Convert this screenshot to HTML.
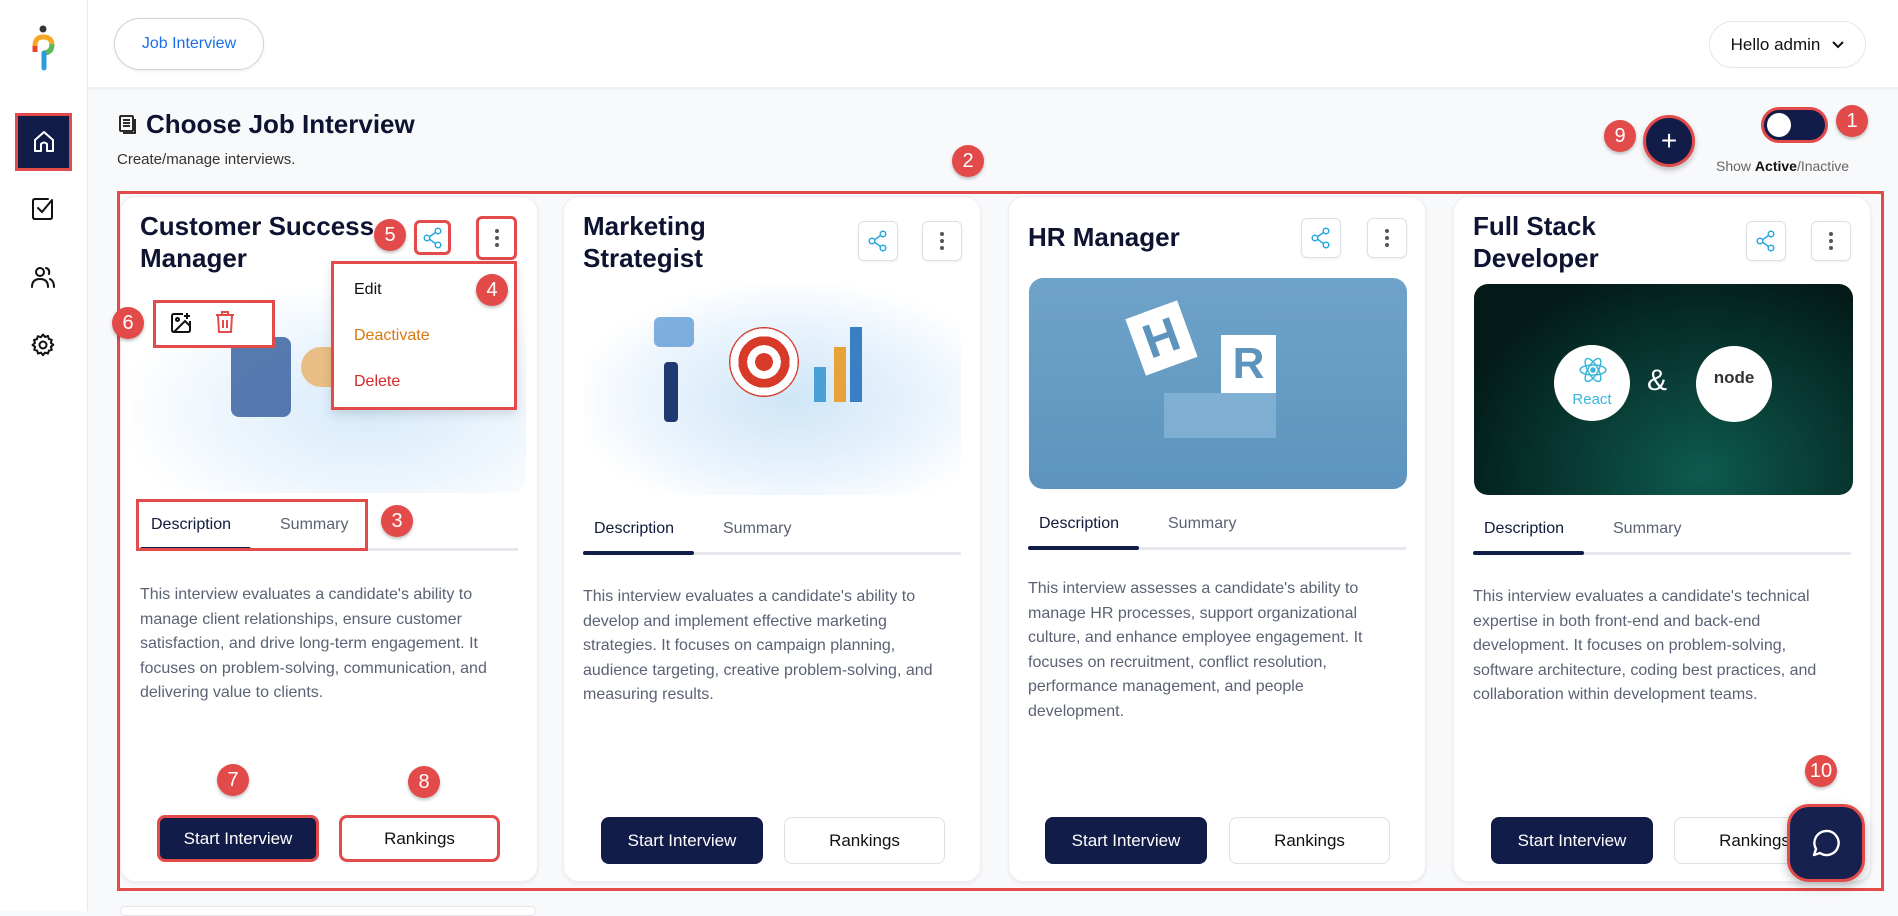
<!DOCTYPE html>
<html><head><meta charset="utf-8">
<style>
*{box-sizing:border-box;margin:0;padding:0}
body{width:1898px;height:911px;overflow:hidden;background:#f8f9fb;font-family:"Liberation Sans",sans-serif;position:relative;color:#111a3a}
.abs{position:absolute}
.side{left:0;top:0;width:88px;height:911px;background:#fff;border-right:1px solid #e8eaef}
.head{left:88px;top:0;width:1810px;height:90px;background:#fff;border-bottom:3px solid #eef0f5}
.pill{left:114px;top:18px;width:150px;height:52px;border:1px solid #cfd3dc;border-radius:26px;background:#fff;color:#1a6fe8;font-size:16px;display:flex;align-items:center;justify-content:center;box-shadow:0 1px 3px rgba(0,0,0,.08)}
.hello{left:1709px;top:21px;width:157px;height:47px;border:1px solid #e4e6ec;border-radius:24px;background:#fff;font-size:17px;display:flex;align-items:center;justify-content:center;gap:12px;color:#111}
.badge{position:absolute;width:32px;height:32px;border-radius:50%;background:#e34a4a;color:#fff;font-size:20px;display:flex;align-items:center;justify-content:center;box-shadow:0 2px 3px rgba(0,0,0,.25);z-index:5}
.red{position:absolute;border:3px solid #e34a4a;z-index:4}
.card{position:absolute;top:196px;width:418px;height:686px;background:#fff;border:1px solid #eceef2;border-radius:16px;box-shadow:0 2px 4px rgba(0,0,0,.06)}
.title{position:absolute;left:19px;font-size:26px;font-weight:bold;line-height:32px;color:#0d1330}
.ib{position:absolute;width:40px;height:40px;border:1px solid #dde0e6;border-radius:6px;background:#fff;display:flex;align-items:center;justify-content:center;box-shadow:0 1px 2px rgba(0,0,0,.06)}
.tabs{position:absolute;left:19px;width:378px;height:3px;background:#e7e8ee}
.tabs i{position:absolute;left:0;top:-1px;width:111px;height:4px;background:#121c48;border-radius:2px}
.tab{position:absolute;font-size:16px}
.desc{position:absolute;left:19px;width:395px;font-size:16px;line-height:24.5px;color:#5a6274}
.btn1{position:absolute;width:162px;height:47px;background:#121c48;color:#fff;border-radius:8px;font-size:17px;display:flex;align-items:center;justify-content:center}
.btn2{position:absolute;width:161px;height:47px;background:#fff;border:1px solid #dde0e6;border-radius:8px;font-size:17px;display:flex;align-items:center;justify-content:center;color:#111}
</style></head><body>
<div class="abs side"></div>
<svg class="abs" style="left:30px;top:24px" width="28" height="48" viewBox="0 0 28 48"><circle cx="13" cy="5" r="3.5" fill="#333"/><path d="M5 22 Q5 13 13 13 Q22 13 22 21 Q22 28 14 29" stroke="#f5a623" stroke-width="5" fill="none"/><path d="M5 22 L5 28" stroke="#e8452c" stroke-width="5"/><path d="M22 20 Q22 28 15 29" stroke="#5cb85c" stroke-width="5" fill="none"/><path d="M14 29 L14 44" stroke="#2d9cdb" stroke-width="5" stroke-linecap="round"/></svg>
<div class="abs" style="left:15px;top:113px;width:57px;height:58px;background:#121c48;border:3px solid #e34a4a"></div>
<svg class="abs" style="left:33px;top:130px" width="22" height="24" viewBox="0 0 22 24" fill="none" stroke="#fff" stroke-width="2" stroke-linejoin="round"><path d="M2 10 L11 2 L20 10 V21 H14 V14 Q11 11 8 14 V21 H2 Z"/></svg>
<svg class="abs" style="left:31px;top:197px" width="24" height="24" viewBox="0 0 24 24" fill="none" stroke="#111" stroke-width="2" stroke-linecap="round"><path d="M21 4 V20 Q21 22 19 22 H4 Q2 22 2 20 V4 Q2 2 4 2 H17"/><path d="M7 11 L11 15 L21 3"/></svg>
<svg class="abs" style="left:31px;top:266px" width="24" height="22" viewBox="0 0 24 22" fill="none" stroke="#111" stroke-width="2" stroke-linecap="round"><circle cx="9" cy="6" r="4"/><path d="M1 21 Q1 13 9 13 Q17 13 17 21"/><path d="M15 2 Q19 3 18 8 M19 13 Q23 15 23 21"/></svg>
<svg class="abs" style="left:31px;top:333px" width="24" height="24" viewBox="0 0 24 24" fill="none" stroke="#111" stroke-width="2"><circle cx="12" cy="12" r="3.5"/><path d="M12 1.5l2 2.5 3-1 .8 3 3 .8-1 3 2.5 2-2.5 2 1 3-3 .8-.8 3-3-1-2 2.5-2-2.5-3 1-.8-3-3-.8 1-3L1.5 12 4 10l-1-3 3-.8.8-3 3 1z" stroke-linejoin="round"/></svg>

<div class="abs head"></div>
<div class="abs pill">Job Interview</div>
<div class="abs hello">Hello admin <svg width="12" height="8" viewBox="0 0 12 8"><path d="M1 1 L6 6 L11 1" stroke="#111" stroke-width="2" fill="none"/></svg></div>

<svg class="abs" style="left:118px;top:114px" width="20" height="22" viewBox="0 0 20 22" fill="none" stroke="#111" stroke-width="1.8"><rect x="2" y="2" width="13" height="15" rx="1"/><path d="M5 6h7M5 9h7M5 12h7M5 19h12V5"/></svg>
<div class="abs" style="left:146px;top:109px;font-size:26px;font-weight:bold;color:#0d1330">Choose Job Interview</div>
<div class="abs" style="left:117px;top:151px;font-size:15px;color:#333">Create/manage interviews.</div>

<div class="badge" style="left:952px;top:145px">2</div>
<div class="badge" style="left:1604px;top:120px">9</div>
<div class="abs" style="left:1643px;top:115px;width:52px;height:52px;border-radius:50%;background:#121c48;border:3px solid #e34a4a;color:#fff;font-size:28px;display:flex;align-items:center;justify-content:center;box-shadow:0 3px 6px rgba(0,0,0,.25)">+</div>
<div class="abs" style="left:1761px;top:107px;width:67px;height:36px;border-radius:18px;background:#121c48;border:3px solid #e34a4a"><div style="position:absolute;left:3px;top:3px;width:24px;height:24px;border-radius:50%;background:#fff"></div></div>
<div class="badge" style="left:1836px;top:105px">1</div>
<div class="abs" style="left:1716px;top:158px;font-size:14px;color:#666">Show <b style="color:#111">Active</b>/Inactive</div>

<div class="red" style="left:117px;top:191px;width:1767px;height:700px;z-index:1"></div>

<!-- card 1 -->
<div class="card" style="left:120px">
 <div class="title" style="top:13px">Customer Success<br>Manager</div>
 <div class="ib" style="left:293px;top:23px;border:3px solid #e34a4a;width:37px;height:35px"><svg width="20" height="22" viewBox="0 0 20 22" fill="none" stroke="#2aa6de" stroke-width="1.5"><circle cx="15" cy="4" r="2.8"/><circle cx="4" cy="11" r="2.8"/><circle cx="15" cy="18" r="2.8"/><path d="M6.5 9.7L12.5 5.5M6.5 12.3L12.5 16.5"/></svg></div>
 <div class="ib" style="left:355px;top:19px;border:3px solid #e34a4a;width:41px;height:44px"><svg width="6" height="20"><circle cx="3" cy="3" r="2" fill="#555"/><circle cx="3" cy="10" r="2" fill="#555"/><circle cx="3" cy="17" r="2" fill="#555"/></svg></div>
 <div class="abs" style="left:10px;top:90px;width:395px;height:206px;border-radius:14px;background:radial-gradient(ellipse at 60% 60%,#d7ebfa 0%,#eef6fd 45%,#fff 75%)"></div>
 <div class="abs" style="left:110px;top:140px;width:60px;height:80px;background:#2f5a9a;border-radius:8px;opacity:.8"></div>
 <div class="abs" style="left:180px;top:150px;width:60px;height:40px;background:#e8b878;border-radius:20px;opacity:.9"></div>
 <div class="abs" style="left:32px;top:103px;width:122px;height:48px;border:3px solid #e34a4a;background:#fff"></div>
 <svg class="abs" style="left:48px;top:114px" width="24" height="24" viewBox="0 0 24 24" fill="none" stroke="#111" stroke-width="2"><path d="M14 3H5Q3 3 3 5V19Q3 21 5 21H19Q21 21 21 19V10"/><circle cx="8.5" cy="8.5" r="1.5"/><path d="M21 15l-5-5L5 21M18 2v6M15 5h6"/></svg>
 <svg class="abs" style="left:93px;top:113px" width="22" height="24" viewBox="0 0 22 24" fill="none" stroke="#e34a4a" stroke-width="2"><path d="M2 5h18M8 5V2h6v3M4 5l1 17h12l1-17M9 10v8M13 10v8"/></svg>
 <div class="abs" style="left:210px;top:64px;width:186px;height:149px;background:#fff;border:3px solid #e34a4a;box-shadow:0 4px 10px rgba(0,0,0,.12);z-index:3">
  <div style="position:absolute;left:20px;top:17px;font-size:16px;color:#111">Edit</div>
  <div style="position:absolute;left:20px;top:63px;font-size:16px;color:#d9780f">Deactivate</div>
  <div style="position:absolute;left:20px;top:109px;font-size:16px;color:#d62828">Delete</div>
 </div>
 <div class="tabs" style="top:351px"><i></i></div>
 <div class="tab" style="left:30px;top:319px">Description</div>
 <div class="tab" style="left:159px;top:319px;color:#5a6274">Summary</div>
 <div class="red" style="left:15px;top:302px;width:232px;height:52px"></div>
 <div class="desc" style="top:386px">This interview evaluates a candidate's ability to<br>manage client relationships, ensure customer<br>satisfaction, and drive long-term engagement. It<br>focuses on problem-solving, communication, and<br>delivering value to clients.</div>
 <div class="btn1" style="left:36px;top:618px;border:3px solid #e34a4a">Start Interview</div>
 <div class="btn2" style="left:218px;top:618px;border:3px solid #e34a4a">Rankings</div>
</div>
<div class="badge" style="left:374px;top:219px">5</div>
<div class="badge" style="left:476px;top:274px">4</div>
<div class="badge" style="left:112px;top:307px">6</div>
<div class="badge" style="left:381px;top:505px">3</div>
<div class="badge" style="left:217px;top:764px">7</div>
<div class="badge" style="left:408px;top:766px">8</div>

<!-- card 2 -->
<div class="card" style="left:563px">
 <div class="title" style="top:13px">Marketing<br>Strategist</div>
 <div class="ib" style="left:294px;top:24px"><svg width="20" height="22" viewBox="0 0 20 22" fill="none" stroke="#2aa6de" stroke-width="1.5"><circle cx="15" cy="4" r="2.8"/><circle cx="4" cy="11" r="2.8"/><circle cx="15" cy="18" r="2.8"/><path d="M6.5 9.7L12.5 5.5M6.5 12.3L12.5 16.5"/></svg></div>
 <div class="ib" style="left:358px;top:24px"><svg width="6" height="20"><circle cx="3" cy="3" r="2" fill="#555"/><circle cx="3" cy="10" r="2" fill="#555"/><circle cx="3" cy="17" r="2" fill="#555"/></svg></div>
 <div class="abs" style="left:19px;top:88px;width:378px;height:210px;border-radius:14px;background:radial-gradient(ellipse at 55% 55%,#cfe6f7 0%,#e9f3fc 45%,#fff 75%)"></div>
 <div class="abs" style="left:90px;top:120px;width:40px;height:30px;border-radius:6px;background:#4a8fd0;opacity:.7"></div>
 <div class="abs" style="left:165px;top:130px;width:70px;height:70px;border-radius:50%;background:radial-gradient(circle,#d83a2a 0 18%,#fff 18% 34%,#d83a2a 34% 52%,#fff 52% 68%,#d83a2a 68%)"></div>
 <div class="abs" style="left:100px;top:165px;width:14px;height:60px;background:#1f3a70;border-radius:4px"></div>
 <div class="abs" style="left:250px;top:170px;width:12px;height:35px;background:#4aa0d8"></div>
 <div class="abs" style="left:270px;top:150px;width:12px;height:55px;background:#e8a23a"></div>
 <div class="abs" style="left:286px;top:130px;width:12px;height:75px;background:#3a7fc4"></div>
 <div class="tabs" style="top:355px"><i></i></div>
 <div class="tab" style="left:30px;top:323px">Description</div>
 <div class="tab" style="left:159px;top:323px;color:#5a6274">Summary</div>
 <div class="desc" style="top:388px">This interview evaluates a candidate's ability to<br>develop and implement effective marketing<br>strategies. It focuses on campaign planning,<br>audience targeting, creative problem-solving, and<br>measuring results.</div>
 <div class="btn1" style="left:37px;top:620px">Start Interview</div>
 <div class="btn2" style="left:220px;top:620px">Rankings</div>
</div>

<!-- card 3 -->
<div class="card" style="left:1008px">
 <div class="title" style="top:24px">HR Manager</div>
 <div class="ib" style="left:292px;top:21px"><svg width="20" height="22" viewBox="0 0 20 22" fill="none" stroke="#2aa6de" stroke-width="1.5"><circle cx="15" cy="4" r="2.8"/><circle cx="4" cy="11" r="2.8"/><circle cx="15" cy="18" r="2.8"/><path d="M6.5 9.7L12.5 5.5M6.5 12.3L12.5 16.5"/></svg></div>
 <div class="ib" style="left:358px;top:21px"><svg width="6" height="20"><circle cx="3" cy="3" r="2" fill="#555"/><circle cx="3" cy="10" r="2" fill="#555"/><circle cx="3" cy="17" r="2" fill="#555"/></svg></div>
 <div class="abs" style="left:20px;top:81px;width:378px;height:211px;border-radius:14px;background:linear-gradient(180deg,#6fa3c9,#5d94bd);overflow:hidden">
  <div style="position:absolute;left:105px;top:30px;width:55px;height:60px;background:#fff;transform:rotate(-20deg);color:#5d94bd;font-size:48px;font-weight:bold;display:flex;align-items:center;justify-content:center">H</div>
  <div style="position:absolute;left:192px;top:57px;width:55px;height:58px;background:#fff;color:#5d94bd;font-size:44px;font-weight:bold;display:flex;align-items:center;justify-content:center">R</div>
  <div style="position:absolute;left:135px;top:115px;width:112px;height:45px;background:#8ab8da;opacity:.7"></div>
 </div>
 <div class="tabs" style="top:350px"><i></i></div>
 <div class="tab" style="left:30px;top:318px">Description</div>
 <div class="tab" style="left:159px;top:318px;color:#5a6274">Summary</div>
 <div class="desc" style="top:380px">This interview assesses a candidate's ability to<br>manage HR processes, support organizational<br>culture, and enhance employee engagement. It<br>focuses on recruitment, conflict resolution,<br>performance management, and people<br>development.</div>
 <div class="btn1" style="left:36px;top:620px">Start Interview</div>
 <div class="btn2" style="left:220px;top:620px">Rankings</div>
</div>

<!-- card 4 -->
<div class="card" style="left:1453px">
 <div class="title" style="top:13px">Full Stack<br>Developer</div>
 <div class="ib" style="left:292px;top:24px"><svg width="20" height="22" viewBox="0 0 20 22" fill="none" stroke="#2aa6de" stroke-width="1.5"><circle cx="15" cy="4" r="2.8"/><circle cx="4" cy="11" r="2.8"/><circle cx="15" cy="18" r="2.8"/><path d="M6.5 9.7L12.5 5.5M6.5 12.3L12.5 16.5"/></svg></div>
 <div class="ib" style="left:357px;top:24px"><svg width="6" height="20"><circle cx="3" cy="3" r="2" fill="#555"/><circle cx="3" cy="10" r="2" fill="#555"/><circle cx="3" cy="17" r="2" fill="#555"/></svg></div>
 <div class="abs" style="left:20px;top:87px;width:379px;height:211px;border-radius:14px;background:radial-gradient(ellipse at 60% 90%,#0e5a4e 0%,#083a33 40%,#031a18 80%)">
  <div style="position:absolute;left:80px;top:61px;width:76px;height:76px;border-radius:50%;background:#fff;text-align:center;color:#3ab7d8;font-size:15px;padding-top:46px">React</div>
  <svg style="position:absolute;left:104px;top:71px" width="30" height="30" viewBox="0 0 30 30" fill="none" stroke="#3ab7d8" stroke-width="1.5"><ellipse cx="15" cy="15" rx="13" ry="5"/><ellipse cx="15" cy="15" rx="13" ry="5" transform="rotate(60 15 15)"/><ellipse cx="15" cy="15" rx="13" ry="5" transform="rotate(-60 15 15)"/><circle cx="15" cy="15" r="2" fill="#3ab7d8"/></svg>
  <div style="position:absolute;left:173px;top:80px;color:#fff;font-size:30px">&amp;</div>
  <div style="position:absolute;left:222px;top:62px;width:76px;height:76px;border-radius:50%;background:#fff;text-align:center;font-size:17px;font-weight:bold;color:#333;padding-top:22px">node</div>
 </div>
 <div class="tabs" style="top:355px"><i></i></div>
 <div class="tab" style="left:30px;top:323px">Description</div>
 <div class="tab" style="left:159px;top:323px;color:#5a6274">Summary</div>
 <div class="desc" style="top:388px">This interview evaluates a candidate's technical<br>expertise in both front-end and back-end<br>development. It focuses on problem-solving,<br>software architecture, coding best practices, and<br>collaboration within development teams.</div>
 <div class="btn1" style="left:37px;top:620px">Start Interview</div>
 <div class="btn2" style="left:220px;top:620px">Rankings</div>
</div>

<div class="badge" style="left:1805px;top:755px">10</div>
<div class="abs" style="left:1787px;top:804px;width:78px;height:78px;border-radius:22px;background:#16214f;border:3px solid #e34a4a;box-shadow:0 4px 10px rgba(0,0,0,.25);z-index:6;display:flex;align-items:center;justify-content:center"><svg width="30" height="30" viewBox="0 0 30 30" fill="none" stroke="#fff" stroke-width="2.4" stroke-linejoin="round"><path d="M15 3 A12 12 0 1 1 9 25 L3 27 L5 21 A12 12 0 0 1 15 3Z"/></svg></div>
<div class="abs" style="left:120px;top:906px;width:416px;height:10px;border:1px solid #e4e6ec;border-radius:10px;background:#fff"></div>
</body></html>
